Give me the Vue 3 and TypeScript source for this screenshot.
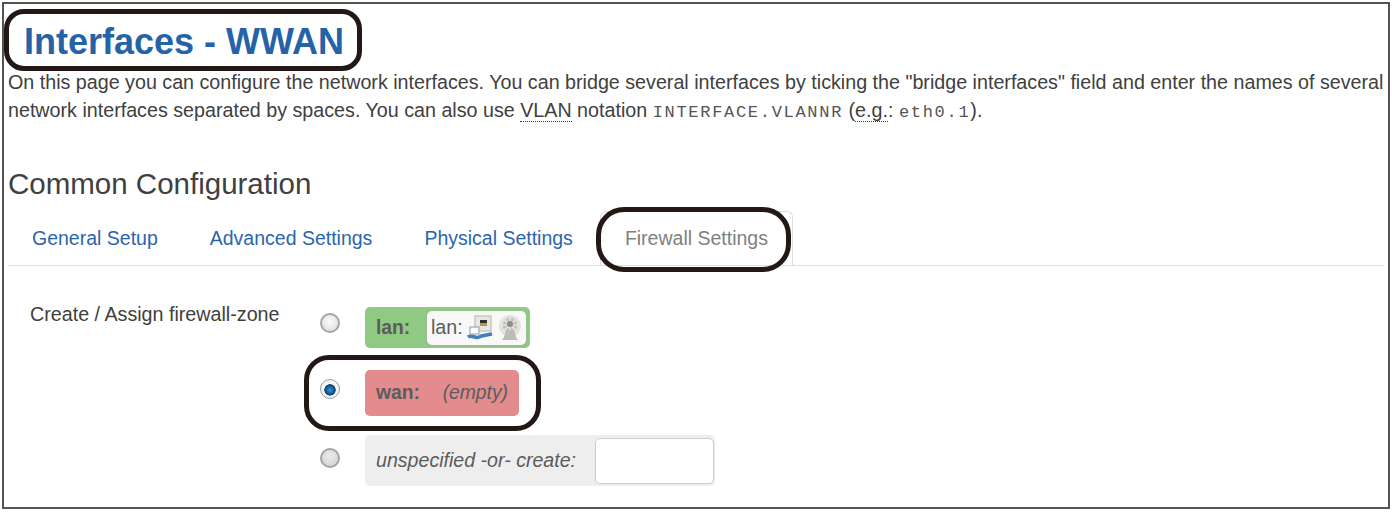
<script setup lang="ts">
interface Tab {
  label: string;
  active?: boolean;
}

const tabs: Tab[] = [
  { label: "General Setup" },
  { label: "Advanced Settings" },
  { label: "Physical Settings" },
  { label: "Firewall Settings", active: true },
];

// callouts drawn over the page, like on the printed manual
const callouts = [
  { left: 4, top: 9, width: 358, height: 62, radius: 20 },
  { left: 596, top: 207, width: 195, height: 65, radius: 28 },
  { left: 304, top: 355, width: 237, height: 76, radius: 25 },
];
</script>

<template>
  <div class="page">
    <h2 class="title">Interfaces - WWAN</h2>
    <p class="intro">
      On this page you can configure the network interfaces. You can bridge several interfaces by ticking the "bridge interfaces" field and enter the names of several<br />
      network interfaces separated by spaces. You can also use
      <abbr>VLAN</abbr> notation <code>INTERFACE.VLANNR</code> (<abbr>e.g.</abbr>: <code>eth0.1</code>).
    </p>
    <h3 class="section">Common Configuration</h3>
    <ul class="tabs">
      <li v-for="tab in tabs" :key="tab.label" class="tab" :class="{ active: tab.active }">{{ tab.label }}</li>
    </ul>
    <div class="field">
      <div class="field-label">Create / Assign firewall-zone</div>
      <div class="zones">
        <div class="zone-row">
          <span class="radio first"></span>
          <div class="zone lan">
            <b>lan:</b>
            <span class="iface">
              lan:
              <svg class="net-icon" width="26" height="26" viewBox="0 0 26 26">
                <rect x="8" y="1" width="16" height="15" fill="#e8e8e2" stroke="#b4b4ac" />
                <rect x="13" y="5" width="7" height="3" fill="#2f2f2f" />
                <rect x="13" y="8" width="7" height="3" fill="#b59a3c" />
                <rect x="3" y="12" width="9" height="7" fill="#fff" stroke="#8a9bb0" />
                <path d="M1 22c4-3 7 2 11 0s8-2 13-3" fill="none" stroke="#3f7fc0" stroke-width="3.5" />
              </svg>
              <svg class="net-icon" width="26" height="26" viewBox="0 0 26 26">
                <circle cx="13" cy="11" r="11" fill="#e2e2de" />
                <circle cx="13" cy="10" r="7.5" fill="#c4c4c0" />
                <path d="M13 1v18M4 10h18M6.5 4l13 12M19.5 4l-13 12" stroke="#ececea" stroke-width="1.2" />
                <circle cx="13" cy="9" r="3" fill="#8c8c88" />
                <path d="M5 25h16l-2-3-2-7H9l-2 7z" fill="#bcbcb8" />
              </svg>
            </span>
          </div>
        </div>
        <div class="zone-row">
          <span class="radio checked"></span>
          <div class="zone wan">
            <b>wan:</b>
            <em>(empty)</em>
          </div>
        </div>
        <div class="zone-row">
          <span class="radio low"></span>
          <div class="zone create">
            <em>unspecified -or- create:</em>
            <span class="zone-input"></span>
          </div>
        </div>
      </div>
    </div>
    <div
      v-for="(c, i) in callouts"
      :key="i"
      class="callout"
      :style="{ left: c.left + 'px', top: c.top + 'px', width: c.width + 'px', height: c.height + 'px', borderRadius: c.radius + 'px' }"
    ></div>
  </div>
</template>

<style>
body {
  margin: 0;
  background: #fff;
}
</style>

<style scoped>
.page {
  position: relative;
  box-sizing: border-box;
  width: 1388px;
  height: 507px;
  margin: 2px 0 0 2px;
  padding: 0 4px;
  border: 2px solid #575352;
  overflow: hidden;
  font-family: "Liberation Sans", Arial, sans-serif;
  color: #404040;
}

.title {
  margin: 15px 0 0 16px;
  font-size: 36px;
  line-height: 46px;
  font-weight: bold;
  color: #2563a9;
}

.intro {
  margin: 3px 0 0 0;
  font-size: 19.7px;
  line-height: 28px;
  white-space: nowrap;
}

.intro abbr {
  border-bottom: 1px dotted #333;
}

.intro code {
  font-family: "Liberation Mono", monospace;
  font-size: 17px;
  letter-spacing: 1.7px;
  color: #555;
}

.section {
  margin: 39px 0 0 0;
  font-size: 29.5px;
  line-height: 36px;
  font-weight: normal;
}

.tabs {
  display: flex;
  margin: 8px 0 0 0;
  padding: 0;
  list-style: none;
  height: 55px;
  border-bottom: 1px solid #ddd;
}

.tab {
  padding: 0 24px;
  margin-right: 4px;
  font-size: 19.5px;
  line-height: 56px;
  color: #2a66ae;
}

.tab.active {
  color: #808080;
  margin-left: -1px;
  margin-top: 1px;
  border: 1px solid #ddd;
  border-bottom: 0;
  border-radius: 6px 6px 0 0;
  line-height: 52px;
}

.field {
  display: flex;
  margin-top: 34px;
}

.field-label {
  width: 312px;
  padding-left: 22px;
  box-sizing: border-box;
  font-size: 19.7px;
  line-height: 28px;
}

.zones {
  display: flex;
  flex-direction: column;
  gap: 22px;
  padding-top: 7px;
}

.zone-row {
  display: flex;
  align-items: center;
}

.radio {
  box-sizing: border-box;
  width: 20px;
  height: 20px;
  margin-right: 25px;
  margin-bottom: 8px;
  border-radius: 50%;
  border: 2px solid #a4a4a4;
  background: radial-gradient(circle at 50% 40%, #fbfbfb, #dadada);
}

.radio.first {
  margin-bottom: 10px;
}

.radio.low {
  margin-bottom: 9px;
  background: radial-gradient(circle at 50% 40%, #ececec, #cfcfcf);
}

.radio.checked {
  border: 1px solid #9a9a9a;
  background: radial-gradient(circle closest-side at 50% 55%, #3e94d2 0, #145f99 45%, #0e3f66 66%, #f4f4f4 74%);
}

.zone {
  display: inline-flex;
  align-items: center;
  box-sizing: border-box;
  border-radius: 5px;
  font-size: 19.3px;
  color: #5c5c5c;
}

.zone b {
  font-weight: bold;
}

.lan {
  width: 165px;
  height: 41px;
  padding: 0 4px 0 11px;
  background: #90c983;
  justify-content: space-between;
}

.iface {
  display: inline-flex;
  align-items: center;
  width: 99px;
  height: 34px;
  padding-left: 4px;
  box-sizing: border-box;
  background: #f8f8f8;
  border-radius: 5px;
  box-shadow: 0 1px 2px #aaa;
  font-size: 19.7px;
}

.net-icon {
  margin-left: 4px;
  filter: blur(0.5px);
}

.wan {
  width: 154px;
  height: 46px;
  padding: 0 11px;
  background: #e38b8d;
  justify-content: space-between;
}

.create {
  width: 350px;
  height: 51px;
  margin-top: -3px;
  padding: 0 1px 0 11px;
  background: #eeeeee;
  justify-content: space-between;
  font-size: 19.6px;
}

.zone-input {
  width: 119px;
  height: 46px;
  box-sizing: border-box;
  background: #fff;
  border: 1px solid #ccc;
  border-radius: 5px;
}

.callout {
  position: absolute;
  box-sizing: border-box;
  margin: -4px 0 0 -4px;
  border: 5px solid #231815;
}
</style>
